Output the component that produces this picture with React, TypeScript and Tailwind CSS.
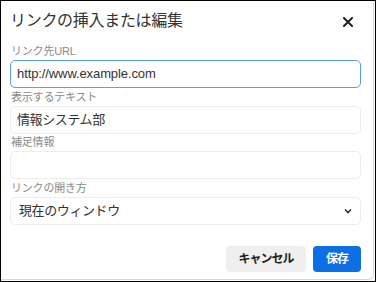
import React from "react";

const font = { fontFamily: '"Liberation Sans", "Noto Sans CJK JP", sans-serif' };

function Field({ label, children }: { label: string; children: React.ReactNode }) {
  return (
    <div className="flex flex-col">
      <div className="h-[17px] text-[11px] leading-[17px] tracking-[-0.2px] text-[#8a8a8a] pl-[1px]">{label}</div>
      {children}
    </div>
  );
}

export default function App() {
  return (
    <div className="w-[376px] h-[282px] border border-black bg-white overflow-hidden" style={font}>
      <div className="w-[373px] h-[279px] bg-white border-r border-b border-[#d8d8d8] rounded-br-[6px] pl-[9px] pr-[12px] flex flex-col">
        <div className="h-[42px] flex items-center justify-between">
          <div className="text-[16px] leading-[20px] text-[#333] tracking-[-0.3px] -mt-[2px]">リンクの挿入または編集</div>
          <svg width="10" height="10" viewBox="0 0 10 10" className="mr-[8px] -mt-[1px]">
            <path d="M1 1 L9 9 M9 1 L1 9" stroke="#222" strokeWidth="2" strokeLinecap="square" />
          </svg>
        </div>
        <div className="flex flex-col gap-[0.7px]">
          <Field label="リンク先URL">
            <div className="h-[28px] border border-[#5c9ded] rounded-[5px] flex items-center px-[6px] text-[13px] tracking-[-0.1px] text-[#333]">
              http://www.example.com
            </div>
          </Field>
          <Field label="表示するテキスト">
            <div className="h-[28px] border border-[#ececec] rounded-[5px] flex items-center px-[6px] text-[13px] tracking-[-0.4px] text-[#333]">
              情報システム部
            </div>
          </Field>
          <Field label="補足情報">
            <div className="h-[28px] border border-[#ececec] rounded-[5px]" />
          </Field>
          <Field label="リンクの開き方">
            <div className="h-[28px] border border-[#ececec] rounded-[5px] flex items-center justify-between pl-[8px] pr-[8px] text-[13px] tracking-[-0.4px] text-[#333]">
              <span>現在のウィンドウ</span>
              <svg width="8" height="6" viewBox="0 0 8 6">
                <path d="M1 1.5 L4 4.5 L7 1.5" stroke="#333" strokeWidth="1.6" fill="none" />
              </svg>
            </div>
          </Field>
        </div>
        <div className="flex justify-end gap-[7px] mt-[21px]">
          <div className="w-[80px] h-[26px] rounded-[4px] bg-[#efefef] flex items-center justify-center text-[12px] tracking-[-1px] font-bold text-[#222]">
            キャンセル
          </div>
          <div className="w-[48px] h-[26px] rounded-[4px] bg-[#0c6fe3] flex items-center justify-center text-[12px] tracking-[-1px] font-bold text-white">
            保存
          </div>
        </div>
      </div>
    </div>
  );
}
